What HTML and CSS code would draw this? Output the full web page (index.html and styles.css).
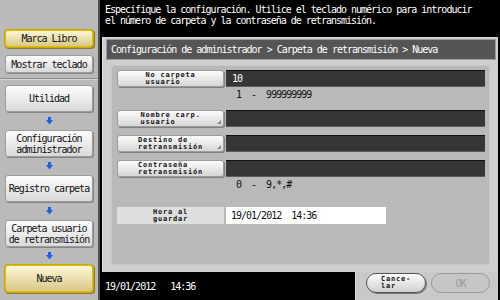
FILE: index.html
```html
<!DOCTYPE html>
<html lang="es">
<head>
  <meta charset="UTF-8" />
  <title>Carpeta de retransmisión - Nueva</title>
  <link rel="stylesheet" href="styles.css">
</head>
<body>
  <div class="screen">

    <!-- Menu lateral -->
    <aside class="side">
      <div class="side-top">
        <div class="btn btn-gold btn-small">Marca Libro</div>
        <div class="btn btn-small btn-kbd">Mostrar teclado</div>
      </div>

      <div class="steps">
        <div class="btn step">Utilidad</div>
        <div class="arrow"><svg width="7" height="8" viewBox="0 0 7 8"><path d="M2 0h3v3h2L3.5 7.5 0 3h2z" fill="#1d5fe6"/></svg></div>
        <div class="btn step">Configuración<br>administrador</div>
        <div class="arrow"><svg width="7" height="8" viewBox="0 0 7 8"><path d="M2 0h3v3h2L3.5 7.5 0 3h2z" fill="#1d5fe6"/></svg></div>
        <div class="btn step">Registro carpeta</div>
        <div class="arrow"><svg width="7" height="8" viewBox="0 0 7 8"><path d="M2 0h3v3h2L3.5 7.5 0 3h2z" fill="#1d5fe6"/></svg></div>
        <div class="btn step">Carpeta usuario<br>de retransmisión</div>
        <div class="arrow"><svg width="7" height="8" viewBox="0 0 7 8"><path d="M2 0h3v3h2L3.5 7.5 0 3h2z" fill="#1d5fe6"/></svg></div>
        <div class="btn btn-gold step">Nueva</div>
      </div>
    </aside>

    <!-- Zona principal -->
    <main class="main">
      <p class="msg">Especifique la configuración. Utilice el teclado numérico para introducir<br>el número de carpeta y la contraseña de retransmisión.</p>

      <section class="panel">
        <div class="crumb">Configuración de administrador &gt; Carpeta de retransmisión &gt; Nueva</div>

        <div class="form">
          <div class="row">
            <div class="key"><span>No carpeta<br>usuario</span></div>
            <div class="field">10</div>
          </div>
          <div class="range">1  -  999999999</div>

          <div class="row row-gap">
            <div class="key key-more"><span>Nombre carp.<br>usuario</span></div>
            <div class="field"></div>
          </div>

          <div class="row row-gap">
            <div class="key key-more"><span>Destino de<br>retransmisión</span></div>
            <div class="field"></div>
          </div>

          <div class="row row-gap">
            <div class="key"><span>Contraseña<br>retransmisión</span></div>
            <div class="field"></div>
          </div>
          <div class="range">0  -  9,*,#</div>

          <div class="row row-time">
            <div class="key key-flat"><span>Hora al<br>guardar</span></div>
            <div class="field field-white">19/01/2012  14:36</div>
          </div>
        </div>
      </section>

      <footer class="bottom">
        <div class="clock">19/01/2012   14:36</div>
        <div class="actions">
          <div class="pill"><span>Cance-<br>lar</span></div>
          <div class="pill pill-off">OK</div>
        </div>
      </footer>
    </main>

  </div>
</body>
</html>
```

FILE: styles.css
```css
* {
  box-sizing: border-box;
}

html, body {
  margin: 0;
}

body {
  width: 500px;
  height: 300px;
  overflow: hidden;
  background: #000;
  font-family: "DejaVu Sans Mono", monospace;
  font-size: 10px;
  letter-spacing: -1px;
  color: #111;
}

.screen {
  display: flex;
  height: 300px;
}

/* ---- menu lateral ---- */

.side {
  width: 100px;
  flex: none;
  background: #bababa;
  border-right: 2px solid #505050;
  padding-top: 30px;
  display: flex;
  flex-direction: column;
}

.side-top {
  display: flex;
  flex-direction: column;
  gap: 8px;
  padding-bottom: 5px;
  border-bottom: 1px solid #8c8c8c;
  box-shadow: 0 1px 0 #d6d6d6;
}

.btn {
  margin-left: 5px;
  width: 88px;
  display: flex;
  align-items: center;
  justify-content: center;
  text-align: center;
  line-height: 11px;
  background: linear-gradient(#fdfdfd, #d9d9d9);
  border: 1px solid #9c9c9c;
  border-radius: 3px;
  box-shadow: 1px 1px 0 #858585;
}

.btn-small {
  height: 17px;
}

.btn-kbd {
  height: 18px;
}

.btn-gold {
  background: linear-gradient(#fdf7d6, #d9c78a);
  border-color: #e0bf00;
  box-shadow: 0 0 0 1px #c9a800, 1px 1px 0 1px #8a7a3a;
}

.steps {
  padding-top: 6px;
  display: flex;
  flex-direction: column;
}

.step {
  height: 27px;
}

.arrow {
  height: 18px;
  margin-left: 5px;
  width: 88px;
  display: flex;
  align-items: center;
  justify-content: center;
}

.arrow svg {
  display: block;
}

/* ---- zona principal ---- */

.main {
  flex: 1;
  display: flex;
  flex-direction: column;
}

.msg {
  margin: 0;
  height: 37px;
  padding: 4px 0 0 5px;
  color: #fff;
  line-height: 11px;
}

.panel {
  height: 235px;
  margin: 0 2px;
  padding: 3px 3px 0 4px;
  background: #cfcfcf;
  border-left: 1px solid #e2e2e2;
}

.crumb {
  height: 19px;
  padding-left: 4px;
  display: flex;
  align-items: center;
  background: #555;
  color: #fff;
  box-shadow: 0 0 0 1px #9a9a9a;
}

.form {
  margin: 6px 5px 0 4px;
  height: 200px;
  padding: 5px 5px 0 6px;
  background: #b9b9b9;
  border-radius: 4px;
  box-shadow: inset 0 0 0 1px #c8c8c8;
}

.row {
  display: flex;
  gap: 2px;
  height: 17px;
}

.row-gap {
  margin-top: 8px;
}

.row-time {
  margin-top: 15px;
}

.key {
  position: relative;
  width: 107px;
  flex: none;
  display: flex;
  align-items: center;
  justify-content: center;
  background: linear-gradient(#fcfcfc, #d6d6d6);
  border: 1px solid #9c9c9c;
  border-radius: 3px;
  box-shadow: 1px 1px 0 #808080;
}

.key span {
  display: inline-block;
  text-align: left;
  font-size: 7px;
  font-weight: bold;
  letter-spacing: 0.8px;
  line-height: 7px;
}

.key-more::after {
  content: "";
  position: absolute;
  right: 2px;
  bottom: 2px;
  border-style: solid;
  border-width: 0 0 4px 4px;
  border-color: transparent transparent #8a8a8a transparent;
}

.key-flat {
  background: #dedede;
  border: none;
  border-radius: 0;
  box-shadow: none;
}

.field {
  flex: 1;
  display: flex;
  align-items: center;
  padding-left: 6px;
  background: #363636;
  border-top: 1px solid #111;
  border-bottom: 1px solid #5c5c5c;
  color: #fff;
}

.field-white {
  flex: none;
  width: 160px;
  padding-left: 5px;
  background: #fff;
  border: none;
  color: #111;
  white-space: pre;
}

.range {
  height: 15px;
  padding-left: 119px;
  display: flex;
  align-items: center;
  white-space: pre;
}

/* ---- pie ---- */

.bottom {
  flex: 1;
  display: flex;
}

.clock {
  width: 255px;
  padding-left: 5px;
  display: flex;
  align-items: center;
  color: #fff;
  white-space: pre;
}

.actions {
  width: 143px;
  padding: 1px 0 0 10px;
  display: flex;
  gap: 5px;
  background: #c9c9c9;
  border-left: 1px solid #e0e0e0;
}

.pill {
  width: 60px;
  height: 20px;
  display: flex;
  align-items: center;
  justify-content: center;
  background: linear-gradient(#fdfdfd, #cfcfcf);
  border: 1px solid #555;
  border-radius: 10px;
  box-shadow: 1px 1px 0 #777;
}

.pill span {
  display: inline-block;
  text-align: left;
  font-size: 7px;
  font-weight: bold;
  letter-spacing: 0.8px;
  line-height: 7px;
}

.pill-off {
  width: 59px;
  background: #c6c6c6;
  border-color: #9a9a9a;
  box-shadow: none;
  color: #999;
}
```
